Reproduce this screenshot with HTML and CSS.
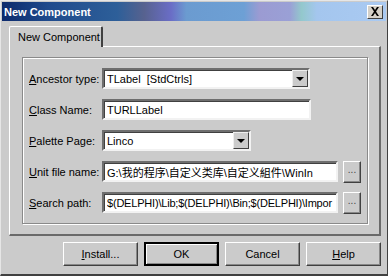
FILE: index.html
```html
<!DOCTYPE html>
<html>
<head>
<meta charset="utf-8">
<link rel="stylesheet" href="styles.css">
</head>
<body>
<div class="window">
  <div class="titlebar">
    <span class="title">New Component</span>
    <span class="close">
      <svg width="10" height="9" viewBox="0 0 10 9"><path d="M1 0h2l2 3 2-3h2L6 4.5 9 9H7L5 6 3 9H1l3-4.5z" fill="#000"/></svg>
    </span>
  </div>
  <div class="tabs"><div class="tab">New Component</div></div>
  <div class="panel">
    <div class="group">
      <div class="row">
        <label class="lbl"><u>A</u>ncestor type:</label>
        <div class="field combo w-anc"><span class="val">TLabel&nbsp; [StdCtrls]</span><span class="drop"><i class="arrow"></i></span></div>
      </div>
      <div class="row">
        <label class="lbl"><u>C</u>lass Name:</label>
        <div class="field w-cls"><span class="val">TURLLabel</span></div>
      </div>
      <div class="row">
        <label class="lbl"><u>P</u>alette Page:</label>
        <div class="field combo w-pal"><span class="val">Linco</span><span class="drop"><i class="arrow"></i></span></div>
      </div>
      <div class="row">
        <label class="lbl"><u>U</u>nit file name:</label>
        <div class="field w-path"><span class="val">G:\我的程序\自定义类库\自定义組件\WinIn</span></div>
        <button class="dots">...</button>
      </div>
      <div class="row">
        <label class="lbl"><u>S</u>earch path:</label>
        <div class="field w-path"><span class="val tight">$(DELPHI)\Lib;$(DELPHI)\Bin;$(DELPHI)\Impor</span></div>
        <button class="dots">...</button>
      </div>
    </div>
  </div>
  <div class="buttons">
    <button class="btn"><u>I</u>nstall...</button>
    <button class="btn default">OK</button>
    <button class="btn">Cancel</button>
    <button class="btn"><u>H</u>elp</button>
  </div>
</div>
</body>
</html>
```

FILE: styles.css
```css
html, body {
  margin: 0;
  padding: 0;
  background: #cbcbcb;
}
body {
  width: 388px;
  height: 276px;
  overflow: hidden;
  font-family: "Liberation Sans", Arial, "Noto Sans CJK SC", sans-serif;
  font-size: 11px;
  color: #000;
}
.window {
  box-sizing: border-box;
  width: 388px;
  height: 276px;
  border-left: 1px solid #e6e6e6;
  border-top: 1px solid #e6e6e6;
  border-right: 1px solid #404040;
  border-bottom: 2px solid #404040;
  padding: 1px 1px 0 1px;
  display: flex;
  flex-direction: column;
}
.titlebar {
  height: 19px;
  display: flex;
  align-items: center;
  justify-content: space-between;
  padding: 0 3px 0 2px;
  background: linear-gradient(90deg, #0c2a6c 0%, #1f4a8c 12%, #2d5f99 30%, #57628f 37%, #6a6dc6 44%, #6b9bd0 48%, #6da0d5 63%, #9b9bd2 67%, #9aa0d6 75%, #93c8cc 78%, #a4c6ee 82%, #aacaf2 100%);
}
.title {
  color: #fff;
  font-weight: bold;
  font-size: 11px;
  white-space: nowrap;
}
.close {
  box-sizing: border-box;
  width: 16px;
  height: 14px;
  background: #d4d0c8;
  border: 1px solid;
  border-color: #fff #404040 #404040 #fff;
  display: flex;
  align-items: center;
  justify-content: center;
}
.tabs {
  display: flex;
  padding: 5px 0 0 7px;
}
.tab {
  box-sizing: border-box;
  width: 94px;
  height: 21px;
  border-left: 1px solid #fff;
  border-top: 1px solid #fff;
  border-right: 2px solid #404040;
  border-radius: 2px 2px 0 0;
  padding: 4px 0 0 8px;
  font-size: 11px;
  white-space: nowrap;
  position: relative;
  z-index: 1;
  margin-bottom: -1px;
  background: #cbcbcb;
}
.panel {
  box-sizing: border-box;
  margin: 0 5px 0 7px;
  height: 190px;
  border-left: 1px solid #fff;
  border-top: 1px solid #fff;
  border-right: 2px solid #6a6a6a;
  border-bottom: 2px solid #6a6a6a;
  padding: 10px 11px 0 12px;
}
.group {
  box-sizing: border-box;
  height: 167px;
  border: 1px solid #8a8a8a;
  box-shadow: inset 1px 1px 0 #fff, 1px 1px 0 #fff;
  padding: 10px 0 0 6px;
  display: flex;
  flex-direction: column;
  gap: 10px;
}
.row {
  display: flex;
  align-items: center;
  height: 21px;
}
.lbl {
  width: 73px;
  font-size: 11px;
  white-space: nowrap;
}
.field {
  box-sizing: border-box;
  height: 21px;
  background: #fff;
  border: 2px solid;
  border-color: #6e6e6e #f2f2f2 #f2f2f2 #6e6e6e;
  box-shadow: inset 1px 1px 0 #404040;
  display: flex;
  align-items: center;
  padding-left: 3px;
  overflow: hidden;
  white-space: nowrap;
  font-size: 11px;
}
.val { flex: 1; min-width: 0; overflow: hidden; }
.tight { letter-spacing: -0.2px; }
.combo { padding-right: 0; }
.w-anc { width: 208px; }
.w-cls { width: 209px; }
.w-pal { width: 149px; }
.w-path { width: 236px; }
.drop {
  box-sizing: border-box;
  width: 16px;
  height: 17px;
  flex: none;
  background: #cbcbcb;
  border: 1px solid;
  border-color: #eee #404040 #404040 #eee;
  display: flex;
  align-items: center;
  justify-content: center;
}
.arrow {
  width: 0;
  height: 0;
  border-left: 4px solid transparent;
  border-right: 4px solid transparent;
  border-top: 4px solid #000;
}
.dots {
  box-sizing: border-box;
  margin-left: 5px;
  width: 18px;
  height: 22px;
  background: #cbcbcb;
  border: 1px solid;
  border-color: #fff #404040 #404040 #fff;
  box-shadow: inset -1px -1px 0 #888;
  font-family: inherit;
  font-size: 10px;
  padding: 0 0 3px 0;
  color: #444;
  line-height: 1;
}
.buttons {
  display: flex;
  justify-content: flex-end;
  gap: 6px;
  padding: 6px 5px 0 0;
}
.btn {
  box-sizing: border-box;
  width: 75px;
  height: 24px;
  background: #cbcbcb;
  border: 1px solid;
  border-color: #fff #404040 #404040 #fff;
  box-shadow: inset -1px -1px 0 #888;
  font-family: inherit;
  font-size: 11px;
  color: #000;
  padding: 0;
}
.btn.default {
  border: 2px solid #000;
  box-shadow: inset 1px 1px 0 #fff, inset -1px -1px 0 #888;
}
```
